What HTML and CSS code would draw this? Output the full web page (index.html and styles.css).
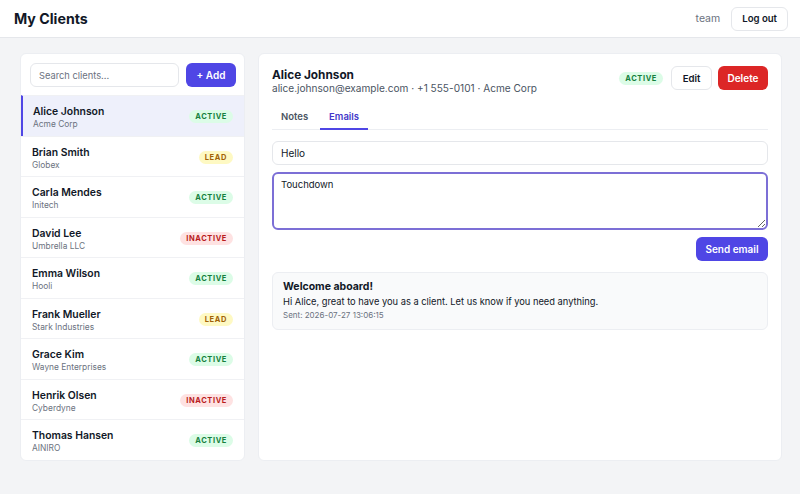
FILE: index.html
```html
<!DOCTYPE html>
<html lang="en">
<head>
  <meta charset="UTF-8" />
  <meta name="viewport" content="width=device-width, initial-scale=1" />
  <title>My Clients</title>
  <link rel="stylesheet" href="styles.css">
</head>
<body>

<header class="topbar">
  <h1>My Clients</h1>
  <div class="user">
    <span class="who">team</span>
    <button class="btn-light">Log out</button>
  </div>
</header>

<div class="layout">

  <aside class="sidebar">
    <div class="search-row">
      <input type="text" placeholder="Search clients...">
      <button class="btn-primary">+ Add</button>
    </div>
    <ul class="clients">
      <li class="selected"><div><b>Alice Johnson</b><small>Acme Corp</small></div><span class="badge active">Active</span></li>
      <li><div><b>Brian Smith</b><small>Globex</small></div><span class="badge lead">Lead</span></li>
      <li><div><b>Carla Mendes</b><small>Initech</small></div><span class="badge active">Active</span></li>
      <li><div><b>David Lee</b><small>Umbrella LLC</small></div><span class="badge inactive">Inactive</span></li>
      <li><div><b>Emma Wilson</b><small>Hooli</small></div><span class="badge active">Active</span></li>
      <li><div><b>Frank Mueller</b><small>Stark Industries</small></div><span class="badge lead">Lead</span></li>
      <li><div><b>Grace Kim</b><small>Wayne Enterprises</small></div><span class="badge active">Active</span></li>
      <li><div><b>Henrik Olsen</b><small>Cyberdyne</small></div><span class="badge inactive">Inactive</span></li>
      <li><div><b>Thomas Hansen</b><small>AINIRO</small></div><span class="badge active">Active</span></li>
    </ul>
  </aside>

  <main class="detail">
    <div class="detail-head">
      <div>
        <h2>Alice Johnson</h2>
        <p class="meta">alice.johnson@example.com · +1 555-0101 · Acme Corp</p>
      </div>
      <div class="actions">
        <span class="badge active">Active</span>
        <button class="btn-light">Edit</button>
        <button class="btn-danger">Delete</button>
      </div>
    </div>

    <nav class="tabs">
      <span>Notes</span>
      <span class="current">Emails</span>
    </nav>

    <!-- compose -->
    <input class="field" type="text" value="Hello">
    <textarea class="field focus">Touchdown</textarea>
    <div class="send-row">
      <button class="btn-primary">Send email</button>
    </div>

    <div class="mail">
      <h3>Welcome aboard!</h3>
      <p>Hi Alice, great to have you as a client. Let us know if you need anything.</p>
      <small>Sent: 2026-07-27 13:06:15</small>
    </div>
  </main>

</div>

</body>
</html>
```

FILE: styles.css
```css
* {
  box-sizing: border-box;
}
body {
  font-family: 'Inter', 'Liberation Sans', sans-serif;
  margin: 0;
  background: #f3f4f6;
  color: #111827;
}
button {
  font-family: inherit;
  cursor: pointer;
}

.topbar {
  display: flex;
  justify-content: space-between;
  align-items: center;
  height: 38px;
  padding: 0 12px 0 14px;
  background: #fff;
  border-bottom: 1px solid #e5e7eb;
}
.topbar h1 {
  margin: 0;
  font-size: 14.2px;
  font-weight: 700;
}
.user {
  display: flex;
  align-items: center;
  gap: 11px;
}
.who {
  font-size: 10.5px;
  color: #6b7280;
}

.btn-light {
  background: #fff;
  border: 1px solid #e5e7eb;
  border-radius: 6px;
  height: 24px;
  padding: 0 10px;
  font-size: 9.6px;
  font-weight: 600;
  color: #111827;
}
.btn-primary {
  background: #4f46e5;
  color: #fff;
  border: none;
  border-radius: 6px;
  height: 24px;
  padding: 0 10px;
  font-size: 10px;
  font-weight: 600;
}
.btn-danger {
  background: #dc2626;
  color: #fff;
  border: none;
  border-radius: 6px;
  height: 24px;
  padding: 0 10px;
  font-size: 10px;
  font-weight: 600;
}

.layout {
  display: grid;
  grid-template-columns: 225px 1fr;
  gap: 13px;
  padding: 15px 18px 0 20px;
}
.sidebar, .detail {
  background: #fff;
  border: 1px solid #eceef2;
  border-radius: 6px;
  height: 408px;
}
.sidebar {
  overflow: hidden;
}
.search-row {
  display: flex;
  gap: 7px;
  padding: 9px 8px 8px 9px;
}
.search-row input {
  flex: 1;
  min-width: 0;
  height: 24px;
  border: 1px solid #e5e7eb;
  border-radius: 6px;
  padding: 0 8px;
  font-family: inherit;
  font-size: 9.3px;
}
.search-row input::placeholder {
  color: #6b7280;
}
.search-row .btn-primary {
  width: 50px;
  padding: 0;
}

.clients {
  list-style: none;
  margin: 0;
  padding: 0;
}
.clients li {
  display: flex;
  justify-content: space-between;
  align-items: center;
  height: 40.5px;
  padding: 2px 11px 0 11px;
  border-top: 1px solid #f0f1f4;
}
.clients li > div {
  padding-top: 2px;
}
.clients li.selected {
  background: #eef0fb;
  border-left: 2px solid #4f46e5;
  padding-left: 10px;
}
.clients b {
  display: block;
  font-size: 10.4px;
  line-height: 14px;
  font-weight: 600;
}
.clients small {
  display: block;
  font-size: 8.4px;
  line-height: 11px;
  color: #6b7280;
}

.badge {
  display: inline-block;
  text-transform: uppercase;
  font-size: 7.5px;
  font-weight: 700;
  letter-spacing: 0.08em;
  padding: 2px 6px;
  border-radius: 8px;
}
.badge.active {
  background: #dcfce7;
  color: #15803d;
}
.badge.lead {
  background: #fef9c3;
  color: #a16207;
}
.badge.inactive {
  background: #fee2e2;
  color: #b91c1c;
}

.detail {
  padding: 14px 13px 0 13px;
}
.detail-head {
  display: flex;
  justify-content: space-between;
  align-items: flex-start;
}
.detail-head h2 {
  margin: 0;
  font-size: 11.8px;
  line-height: 14px;
  font-weight: 700;
}
.meta {
  margin: 0;
  font-size: 10.1px;
  line-height: 13px;
  color: #4b5563;
}
.actions {
  display: flex;
  align-items: center;
  gap: 6px;
  margin-top: -2px;
}
.actions .badge {
  margin-right: 2px;
}
.actions .btn-light {
  width: 41px;
  padding: 0;
}
.actions .btn-danger {
  width: 50px;
  padding: 0;
}

.tabs {
  display: flex;
  gap: 3px;
  margin-top: 12px;
  border-bottom: 1px solid #eceef2;
}
.tabs span {
  font-size: 9.5px;
  font-weight: 600;
  color: #4b5563;
  padding: 4px 9px 6px;
}
.tabs .current {
  color: #4338ca;
  border-bottom: 2px solid #4f46e5;
  margin-bottom: -1px;
}

.field {
  display: block;
  width: 100%;
  margin-top: 11px;
  border: 1px solid #e5e7eb;
  border-radius: 6px;
  padding: 0 8px;
  font-family: inherit;
  font-size: 10px;
  color: #111827;
  height: 24px;
}
textarea.field {
  margin-top: 7px;
  height: 58px;
  padding: 6px 8px;
  font-size: 9.5px;
  resize: vertical;
}
.field.focus {
  border: 2px solid #7c6fd6;
  padding: 5px 7px;
}

.send-row {
  display: flex;
  justify-content: flex-end;
  margin-top: 7px;
}
.send-row .btn-primary {
  width: 72px;
  padding: 0;
}

.mail {
  margin-top: 11px;
  background: #f9fafb;
  border: 1px solid #eceef2;
  border-radius: 6px;
  padding: 7px 10px 8px;
}
.mail h3 {
  margin: 0;
  font-size: 10.5px;
  line-height: 14px;
  font-weight: 700;
}
.mail p {
  margin: 1px 0 0;
  font-size: 9.3px;
  line-height: 13px;
}
.mail small {
  display: block;
  margin-top: 2px;
  font-size: 8px;
  line-height: 11px;
  color: #6b7280;
}
```
